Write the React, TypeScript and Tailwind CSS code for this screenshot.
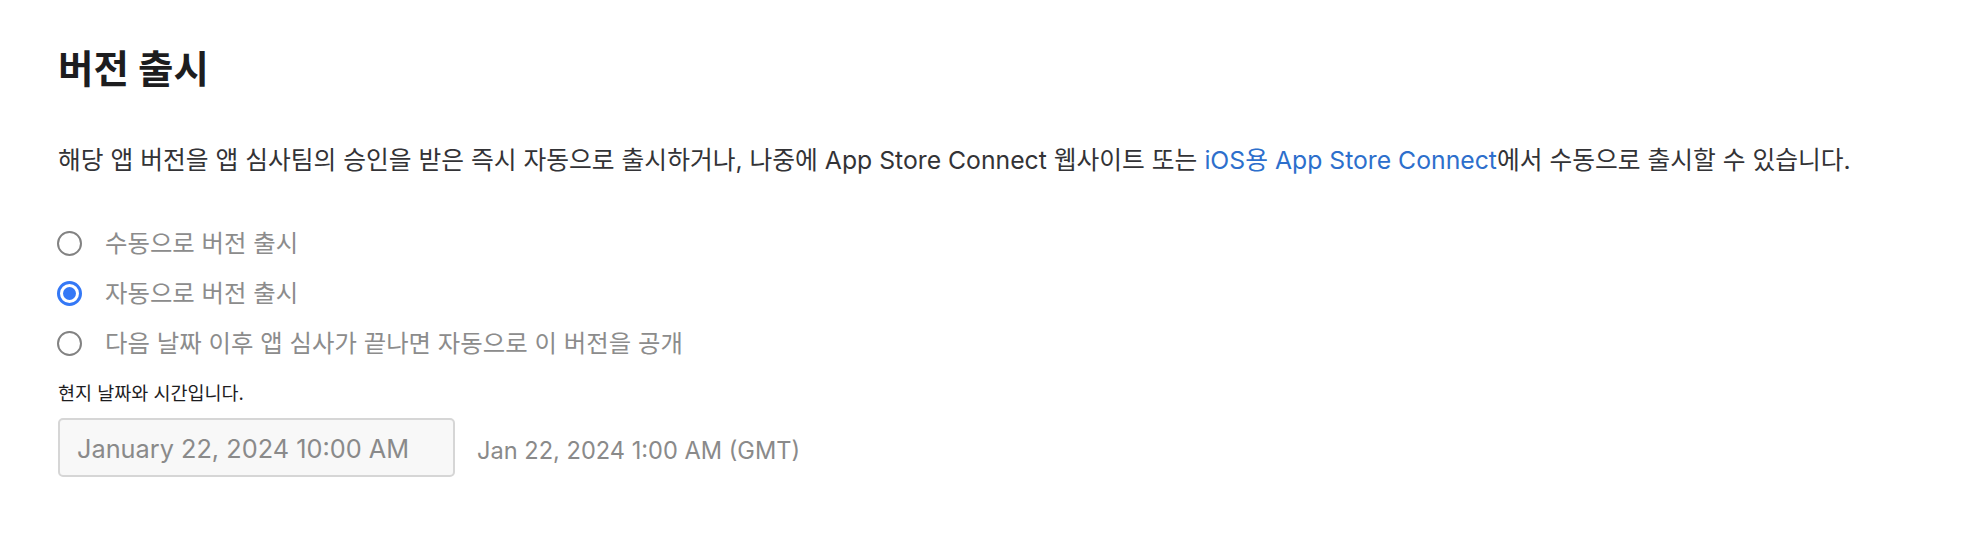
import { useState } from "react";

const FONT = "font-['Inter','Noto_Sans_CJK_KR',sans-serif]";

const options = [
  "수동으로 버전 출시",
  "자동으로 버전 출시",
  "다음 날짜 이후 앱 심사가 끝나면 자동으로 이 버전을 공개",
];

const Radio = ({ checked }: { checked: boolean }) =>
  checked ? (
    <span className="flex items-center justify-center size-[25px] rounded-full border-[3px] border-[#3478f6] bg-white">
      <span className="block size-[13px] rounded-full bg-[#3478f6]" />
    </span>
  ) : (
    <span className="block size-[25px] rounded-full border-2 border-[#828282] bg-white" />
  );

export default function App() {
  const [selected, setSelected] = useState(1);

  return (
    <div className={`min-h-[544px] w-full bg-white pl-[58px] pt-[47px] ${FONT}`}>
      <h2 className="h-[44px] text-[38.5px] leading-[44px] font-bold text-[#1d1d1f]">
        버전 출시
      </h2>

      <p className="mt-[54px] text-[24.75px] leading-[30px] text-[#333336]">
        해당 앱 버전을 앱 심사팀의 승인을 받은 즉시 자동으로 출시하거나, 나중에 App Store Connect 웹사이트 또는{" "}
        <a className="text-[#2d6fcc]" href="#">
          iOS용 App Store Connect
        </a>
        에서 수동으로 출시할 수 있습니다.
      </p>

      <div className="mt-[43px] flex flex-col">
        {options.map((label, i) => (
          <label
            key={label}
            onClick={() => setSelected(i)}
            className="flex h-[50px] items-center gap-[23px] cursor-pointer"
          >
            <span className="ml-[-1px] shrink-0">
              <Radio checked={selected === i} />
            </span>
            <span className="text-[24.4px] text-[#8c8c8c]">{label}</span>
          </label>
        ))}
      </div>

      <div className="mt-[13px] h-[24px] text-[18.5px] leading-[24px] text-[#1d1d1f]">
        현지 날짜와 시간입니다.
      </div>

      <div className="mt-[13px] flex items-center gap-[22px]">
        <div className="flex h-[59px] w-[397px] items-center rounded-[5px] border-2 border-[#d6d6d6] bg-[#f8f8f8] px-[17px] pt-[2px] text-[25.3px] text-[#8a8a8a]">
          January 22, 2024 10:00 AM
        </div>
        <span className="pt-[7px] text-[23.6px] text-[#8a8a8a]">Jan 22, 2024 1:00 AM (GMT)</span>
      </div>
    </div>
  );
}
